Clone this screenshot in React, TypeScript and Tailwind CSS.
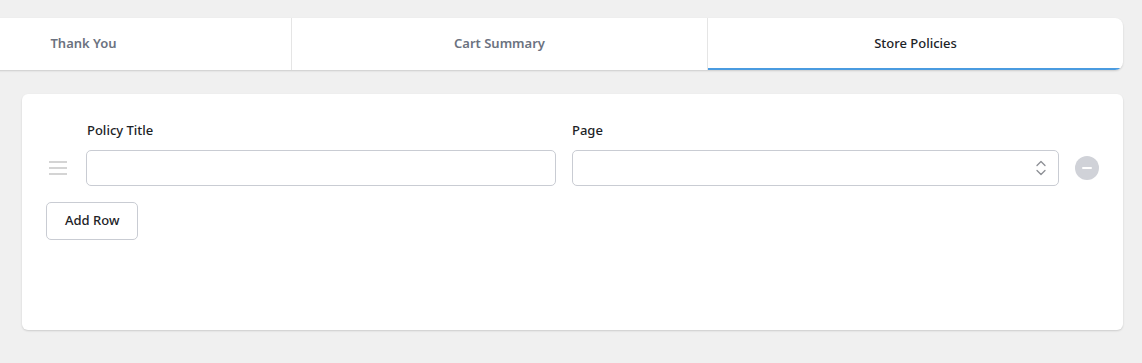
import React from "react";

export default function App() {
  const font = { fontFamily: '"Noto Sans", "Open Sans", sans-serif' };
  return (
    <div className="w-[1142px] h-[363px] bg-[#f0f0f0] overflow-hidden" style={font}>
      <div className="pt-[18px] pr-[19px]">
        <div className="ml-[-124px] flex h-[52px] bg-white rounded-r-[8px] shadow-[0_1px_2px_rgba(0,0,0,0.15)] overflow-hidden">
          <div className="w-[416px] flex items-center justify-center text-[13px] font-semibold text-[#6b7280] border-r border-[#e5e5e5]">
            Thank You
          </div>
          <div className="w-[416px] flex items-center justify-center text-[13px] font-semibold text-[#6b7280] border-r border-[#e5e5e5]">
            Cart Summary
          </div>
          <div className="flex-1 flex items-center justify-center text-[13px] font-medium text-[#1d2327] border-b-[2px] border-[#4a9be0] pt-[2px]">
            Store Policies
          </div>
        </div>
      </div>
      <div className="mt-[24px] ml-[22px] w-[1101px] h-[236px] bg-white rounded-[6px] shadow-[0_1px_2px_rgba(0,0,0,0.15)] px-[24px] pt-[26px]">
        <div className="flex gap-[16px] pl-[41px] pr-[40px]">
          <div className="w-[469px] text-[13px] font-medium text-[#1d2327] leading-[20px]">Policy Title</div>
          <div className="flex-1 text-[13px] font-medium text-[#1d2327] leading-[20px]">Page</div>
        </div>
        <div className="flex items-center mt-[10px]">
          <div className="w-[40px] flex flex-col gap-[4px] pl-[3px]">
            <div className="w-[18px] h-[2px] bg-[#d4d4d4]" />
            <div className="w-[18px] h-[2px] bg-[#d4d4d4]" />
            <div className="w-[18px] h-[2px] bg-[#d4d4d4]" />
          </div>
          <div className="w-[470px] h-[36px] border border-[#c9ccd3] rounded-[5px]" />
          <div className="ml-[16px] flex-1 h-[36px] border border-[#c9ccd3] rounded-[5px] flex items-center justify-end pr-[11px]">
            <svg width="12" height="18" viewBox="0 0 12 18" fill="none" stroke="#8c8f94" strokeWidth="1.3" strokeLinecap="round" strokeLinejoin="round">
              <path d="M2 6.5 L6 2.5 L10 6.5" />
              <path d="M2 11.5 L6 15.5 L10 11.5" />
            </svg>
          </div>
          <div className="ml-[16px] w-[24px] h-[24px] rounded-full bg-[#d0d2d8] flex items-center justify-center">
            <div className="w-[10px] h-[2px] bg-white rounded" />
          </div>
        </div>
        <button className="mt-[16px] h-[38px] px-[18px] border border-[#c9ccd3] rounded-[5px] bg-white text-[13px] font-medium text-[#1d2327]" style={font}>
          Add Row
        </button>
      </div>
    </div>
  );
}
